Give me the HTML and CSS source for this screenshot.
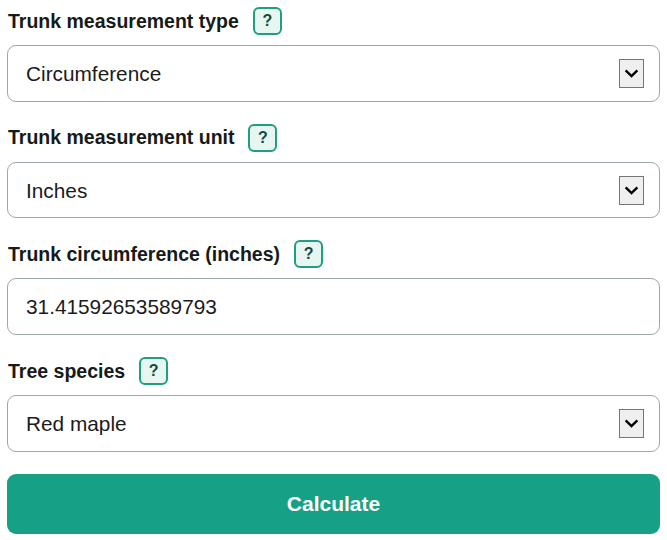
FILE: index.html
```html
<!DOCTYPE html>
<html lang="en">
<head>
<meta charset="utf-8">
<title>Tree age calculator</title>
<link rel="stylesheet" href="styles.css">
</head>
<body>
<form class="calc">
  <div class="field">
    <div class="label-row">
      <label class="label" for="mtype">Trunk measurement type</label>
      <span class="help">?</span>
    </div>
    <div class="select-wrap">
      <select id="mtype" class="control">
        <option>Circumference</option>
      </select>
      <span class="arrow"><svg viewBox="0 0 16 10" width="15" height="9"><path d="M1.5 1.5 L8 8 L14.5 1.5" fill="none" stroke="#000" stroke-width="2.6"/></svg></span>
    </div>
  </div>
  <div class="field">
    <div class="label-row">
      <label class="label" for="munit">Trunk measurement unit</label>
      <span class="help">?</span>
    </div>
    <div class="select-wrap">
      <select id="munit" class="control">
        <option>Inches</option>
      </select>
      <span class="arrow"><svg viewBox="0 0 16 10" width="15" height="9"><path d="M1.5 1.5 L8 8 L14.5 1.5" fill="none" stroke="#000" stroke-width="2.6"/></svg></span>
    </div>
  </div>
  <div class="field">
    <div class="label-row">
      <label class="label" for="circ">Trunk circumference (inches)</label>
      <span class="help">?</span>
    </div>
    <input id="circ" class="control" type="text" value="31.41592653589793">
  </div>
  <div class="field">
    <div class="label-row">
      <label class="label" for="species">Tree species</label>
      <span class="help">?</span>
    </div>
    <div class="select-wrap">
      <select id="species" class="control">
        <option>Red maple</option>
      </select>
      <span class="arrow"><svg viewBox="0 0 16 10" width="15" height="9"><path d="M1.5 1.5 L8 8 L14.5 1.5" fill="none" stroke="#000" stroke-width="2.6"/></svg></span>
    </div>
  </div>
  <button type="button" class="calc-btn">Calculate</button>
</form>
</body>
</html>
```
FILE: styles.css
```css
html, body {
  margin: 0;
  padding: 0;
  background: #ffffff;
}
body {
  font-family: "Liberation Sans", Arial, sans-serif;
  color: #1b1b1b;
}
.calc {
  display: flex;
  flex-direction: column;
  padding: 7px 7px 0 7px;
}
.field {
  display: flex;
  flex-direction: column;
  gap: 10px;
  margin-bottom: 22px;
}
.label-row {
  display: flex;
  align-items: center;
  gap: 14px;
  height: 28px;
  padding-left: 1px;
}
.label {
  font-weight: bold;
  font-size: 19.5px;
  color: #161a19;
}
.help {
  box-sizing: border-box;
  width: 29px;
  height: 28px;
  border: 2px solid #1e9e82;
  border-radius: 6px;
  background: #e8f6f2;
  color: #124a42;
  font-weight: bold;
  font-size: 16px;
  display: flex;
  align-items: center;
  justify-content: center;
}
.select-wrap {
  position: relative;
}
.control {
  box-sizing: border-box;
  width: 100%;
  height: 56.7px;
  border: 1.5px solid #9ea8a6;
  border-radius: 9px;
  background: #ffffff;
  font-family: "Liberation Sans", Arial, sans-serif;
  font-size: 20.8px;
  color: #1b1b1b;
  padding: 0 18px;
  margin: 0;
  appearance: none;
  -webkit-appearance: none;
  outline: none;
}
.arrow {
  position: absolute;
  right: 16px;
  top: 14px;
  box-sizing: border-box;
  width: 25px;
  height: 29px;
  background: #efefef;
  border: 1px solid #767676;
  display: flex;
  align-items: center;
  justify-content: center;
  pointer-events: none;
}
.calc-btn {
  box-sizing: border-box;
  width: 100%;
  height: 60px;
  border: none;
  border-radius: 9px;
  background: #16a085;
  color: #ffffff;
  font-family: "Liberation Sans", Arial, sans-serif;
  font-weight: bold;
  font-size: 21px;
}
```
